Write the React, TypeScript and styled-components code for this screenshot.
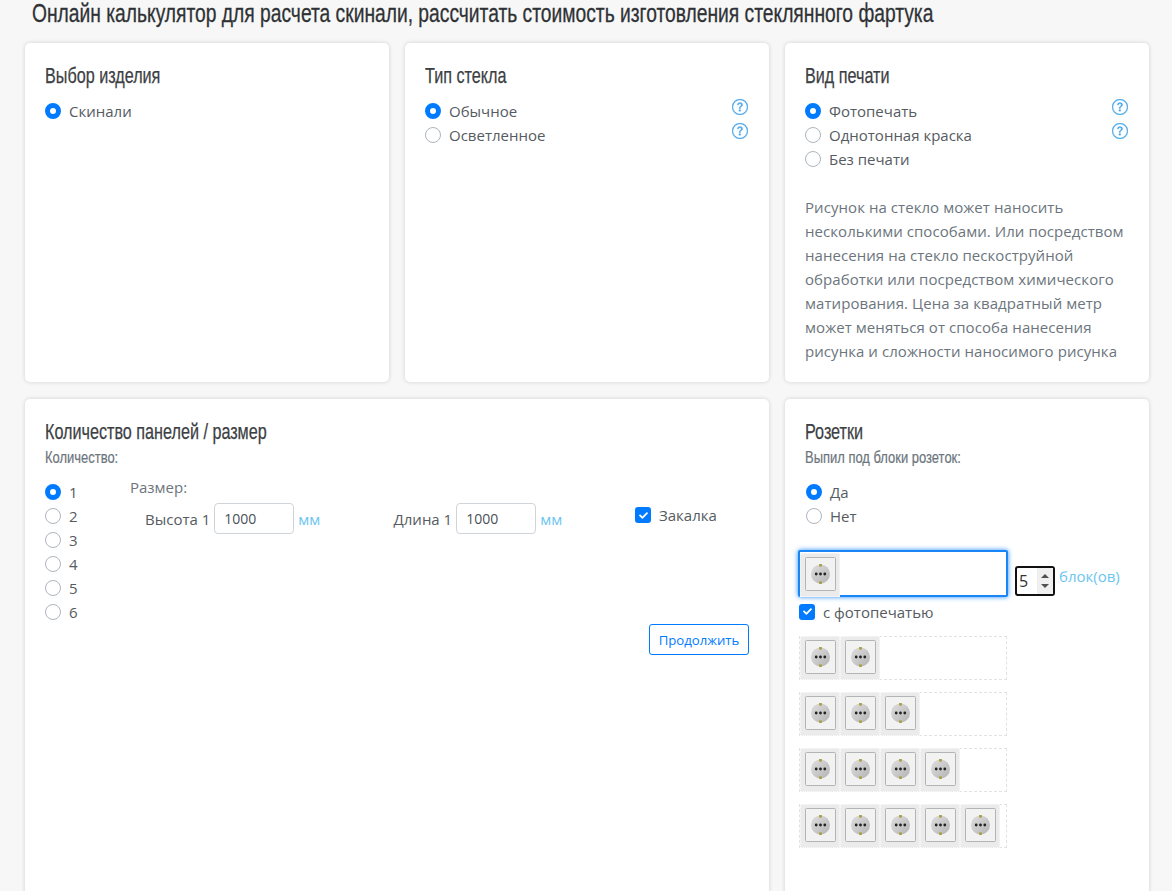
import React, { useId } from 'react';
import styled, { createGlobalStyle } from 'styled-components';
import { BsQuestionCircle } from 'react-icons/bs';
import { FaCheck } from 'react-icons/fa';

const GlobalStyle = createGlobalStyle`
  html, body {
    margin: 0;
    height: 891px;
    overflow: hidden;
    background: #f7f7f7;
    font-family: "Open Sans", "Noto Sans", sans-serif;
    font-size: 15px;
    color: #555b61;
  }
  * { box-sizing: border-box; }
`;

const Page = styled.div`
  height: 891px;
  overflow: hidden;
  padding: 0 23px 0 25px;
`;

const PageTitle = styled.h1`
  width: max-content;
  margin: 0 0 0 7px;
  height: 43px;
  font-family: "Liberation Sans", sans-serif;
  font-weight: 400;
  font-size: 26px;
  line-height: 26px;
  color: #2f3235;
  white-space: nowrap;
  transform: scaleX(0.74);
  transform-origin: left center;
  -webkit-text-stroke: 0.3px #2f3235;
`;

const Grid = styled.div`
  display: grid;
  grid-template-columns: 364px 364px 364px;
  grid-template-rows: 339px 600px;
  gap: 17px 16px;
`;

const Card = styled.section<{ $wide?: boolean }>`
  grid-column: ${(p) => (p.$wide ? 'span 2' : 'span 1')};
  background: #fff;
  border-radius: 5px;
  box-shadow: 0 0 4px rgba(0, 0, 0, 0.16);
  padding: 20px;
`;

const CardTitle = styled.h2`
  margin: 0;
  font-family: "Liberation Sans", sans-serif;
  font-weight: 400;
  font-size: 22px;
  line-height: 26px;
  color: #3c4043;
  white-space: nowrap;
  transform: scaleX(0.735);
  transform-origin: left center;
  -webkit-text-stroke: 0.25px #3c4043;
`;

const SubTitle = styled.div`
  font-family: "Liberation Sans", sans-serif;
  font-size: 16px;
  line-height: 26px;
  color: #6c757d;
  white-space: nowrap;
  transform: scaleX(0.81);
  transform-origin: left center;
  -webkit-text-stroke: 0.2px #6c757d;
`;

const OptionList = styled.div`
  margin-top: 10px;
  display: flex;
  flex-direction: column;
`;

const OptionRow = styled.div`
  display: flex;
  align-items: center;
  height: 24px;
`;

const RadioMark = styled.span<{ $on?: boolean }>`
  flex: none;
  width: 16px;
  height: 16px;
  border-radius: 50%;
  background: #fff;
  border: ${(p) => (p.$on ? '5px solid #007bff' : '1px solid #adb5bd')};
  margin-right: 8px;
`;

const CheckMark = styled.span`
  flex: none;
  width: 16px;
  height: 16px;
  border-radius: 3px;
  background: #007bff;
  color: #fff;
  display: inline-flex;
  align-items: center;
  justify-content: center;
  font-size: 9px;
`;

const HelpIcon = styled(BsQuestionCircle)`
  margin-left: auto;
  margin-top: -8px;
  margin-right: 1px;
  font-size: 16px;
  color: #4ea9ec;
  stroke: currentColor;
  stroke-width: 0.3px;
`;

const Description = styled.p`
  margin: 24px 0 0;
  line-height: 24px;
  letter-spacing: 0.06px;
  color: #6c757d;
`;

const PanelBody = styled.div`
  display: flex;
  margin-top: 6px;
`;

const CountColumn = styled.div`
  width: 85px;
  margin-top: 3px;
`;

const SizeColumn = styled.div`
  width: 505px;
`;

const SizeLabel = styled.div`
  line-height: 20px;
  color: #6c757d;
`;

const FieldRow = styled.div`
  display: flex;
  align-items: center;
  margin-top: 6px;
  padding-left: 15px;
`;

const Field = styled.label`
  display: flex;
  align-items: center;
  width: 249px;
  & + & {
    margin-left: 7px;
  }
`;

const FieldName = styled.span`
  margin-right: 4px;
`;

const TextInput = styled.div`
  width: 80px;
  height: 31px;
  border: 1px solid #ced4da;
  border-radius: 4px;
  padding-left: 9px;
  font-size: 14px;
  line-height: 29px;
  color: #495057;
`;

const Unit = styled.span`
  margin-left: 4px;
  color: #6cc5f0;
`;

const HardeningRow = styled.label`
  display: flex;
  align-items: center;
  align-self: flex-start;
  gap: 8px;
  height: 24px;
  margin-top: 26px;
`;

const ButtonRow = styled.div`
  display: flex;
  justify-content: flex-end;
  margin-top: 0;
`;

const OutlineButton = styled.button`
  width: 100px;
  height: 31px;
  padding: 0;
  background: #fff;
  border: 1px solid #007bff;
  border-radius: 3px;
  color: #007bff;
  font: 13.2px "Open Sans", sans-serif;
`;

const SocketRadios = styled.div`
  margin: 9px 0 0 1px;
  display: flex;
  flex-direction: column;
`;

const SelectedLine = styled.div`
  display: flex;
  margin: 22px 0 0 -7px;
`;

const FocusBox = styled.div`
  width: 210px;
  height: 47px;
  background: #fff;
  border: 2px solid #1a86f5;
  border-radius: 2px;
  box-shadow: 0 0 5px rgba(0, 123, 255, 0.85);
  padding: 2px 0 0 0;
`;

const Spinner = styled.div`
  width: 40px;
  height: 30px;
  margin: 16px 0 0 7px;
  border: 2px solid #111;
  border-radius: 3px;
  display: flex;
  justify-content: space-between;
  padding-left: 2px;
  line-height: 27px;
  font-size: 16px;
  color: #333;
`;

const SpinButtons = styled.span`
  width: 16px;
  background: #efefef;
  display: flex;
  flex-direction: column;
  align-items: center;
  justify-content: center;
  gap: 6px;
  color: #505050;
`;

const Arrow = styled.span<{ $down?: boolean }>`
  width: 0;
  height: 0;
  border-left: 4px solid transparent;
  border-right: 4px solid transparent;
  ${(p) => (p.$down ? 'border-top: 4px solid currentColor;' : 'border-bottom: 4px solid currentColor;')}
`;

const BlockLabel = styled.span`
  margin: 16px 0 0 4px;
  line-height: 20px;
  color: #6cc5f0;
`;

const PhotoRow = styled.div`
  display: flex;
  align-items: center;
  gap: 8px;
  margin: 6px 0 0 -6px;
  height: 17px;
`;

const SocketStack = styled.div`
  display: flex;
  flex-direction: column;
  gap: 12px;
  margin: 16px 0 0 -6px;
`;

const SocketGroup = styled.div`
  display: flex;
  width: 208px;
  height: 44px;
  border: 1px dashed #e2e2e2;
`;

const Tile = styled.span`
  display: block;
  flex: none;
  width: 40px;
  height: 44px;
  margin-top: -1px;
  background: #ebebeb;
  border: 1px dotted #fafafa;
`;

const SocketTile = () => {
  const id = useId();
  return (
    <Tile>
      <svg width="38" height="42" viewBox="0 0 38 42" aria-hidden="true">
        <defs>
          <linearGradient id={id} x1="0" y1="0" x2="1" y2="1">
            <stop offset="0" stopColor="#dedede" />
            <stop offset="1" stopColor="#b4b4b4" />
          </linearGradient>
        </defs>
        <rect x="4.5" y="3.5" width="30" height="33" rx="1" fill="#f2f2f2" stroke="#b4b4b4" />
        <circle cx="19.5" cy="20" r="9.5" fill={`url(#${id})`} />
        <rect x="18.2" y="10" width="2.6" height="2.6" fill="#a89c3e" />
        <rect x="18.2" y="27.4" width="2.6" height="2.6" fill="#a89c3e" />
        <circle cx="15.2" cy="20" r="1.4" fill="#222" />
        <circle cx="19.5" cy="20" r="1.4" fill="#222" />
        <circle cx="23.8" cy="20" r="1.4" fill="#222" />
      </svg>
    </Tile>
  );
};

const Radio = ({ on, label, help }: { on?: boolean; label: string; help?: boolean }) => (
  <OptionRow>
    <RadioMark $on={on} />
    <span>{label}</span>
    {help && <HelpIcon />}
  </OptionRow>
);

const Check = () => (
  <CheckMark>
    <FaCheck />
  </CheckMark>
);

const SizeField = ({ name }: { name: string }) => (
  <Field>
    <FieldName>{name}</FieldName>
    <TextInput>1000</TextInput>
    <Unit>мм</Unit>
  </Field>
);

const App: React.FC = () => {
  return (
    <Page>
      <GlobalStyle />
      <PageTitle>Онлайн калькулятор для расчета скинали, рассчитать стоимость изготовления стеклянного фартука</PageTitle>
      <Grid>
        <Card>
          <CardTitle>Выбор изделия</CardTitle>
          <OptionList>
            <Radio on label="Скинали" />
          </OptionList>
        </Card>

        <Card>
          <CardTitle>Тип стекла</CardTitle>
          <OptionList>
            <Radio on label="Обычное" help />
            <Radio label="Осветленное" help />
          </OptionList>
        </Card>

        <Card>
          <CardTitle>Вид печати</CardTitle>
          <OptionList>
            <Radio on label="Фотопечать" help />
            <Radio label="Однотонная краска" help />
            <Radio label="Без печати" />
          </OptionList>
          <Description>
            Рисунок на стекло может наносить несколькими способами. Или посредством нанесения на стекло
            пескоструйной обработки или посредством химического матирования. Цена за квадратный метр может
            меняться от способа нанесения рисунка и сложности наносимого рисунка
          </Description>
        </Card>

        <Card $wide>
          <CardTitle>Количество панелей / размер</CardTitle>
          <SubTitle>Количество:</SubTitle>
          <PanelBody>
            <CountColumn>
              {[1, 2, 3, 4, 5, 6].map((n) => (
                <Radio key={n} on={n === 1} label={String(n)} />
              ))}
            </CountColumn>
            <SizeColumn>
              <SizeLabel>Размер:</SizeLabel>
              <FieldRow>
                <SizeField name="Высота 1" />
                <SizeField name="Длина 1" />
              </FieldRow>
            </SizeColumn>
            <HardeningRow>
              <Check />
              <span>Закалка</span>
            </HardeningRow>
          </PanelBody>
          <ButtonRow>
            <OutlineButton>Продолжить</OutlineButton>
          </ButtonRow>
        </Card>

        <Card>
          <CardTitle>Розетки</CardTitle>
          <SubTitle>Выпил под блоки розеток:</SubTitle>
          <SocketRadios>
            <Radio on label="Да" />
            <Radio label="Нет" />
          </SocketRadios>
          <SelectedLine>
            <FocusBox>
              <SocketTile />
            </FocusBox>
            <Spinner>
              5
              <SpinButtons>
                <Arrow />
                <Arrow $down />
              </SpinButtons>
            </Spinner>
            <BlockLabel>блок(ов)</BlockLabel>
          </SelectedLine>
          <PhotoRow>
            <Check />
            <span>с фотопечатью</span>
          </PhotoRow>
          <SocketStack>
            {[2, 3, 4, 5].map((count) => (
              <SocketGroup key={count}>
                {Array.from({ length: count }, (_, i) => (
                  <SocketTile key={i} />
                ))}
              </SocketGroup>
            ))}
          </SocketStack>
        </Card>
      </Grid>
    </Page>
  );
};

export default App;
